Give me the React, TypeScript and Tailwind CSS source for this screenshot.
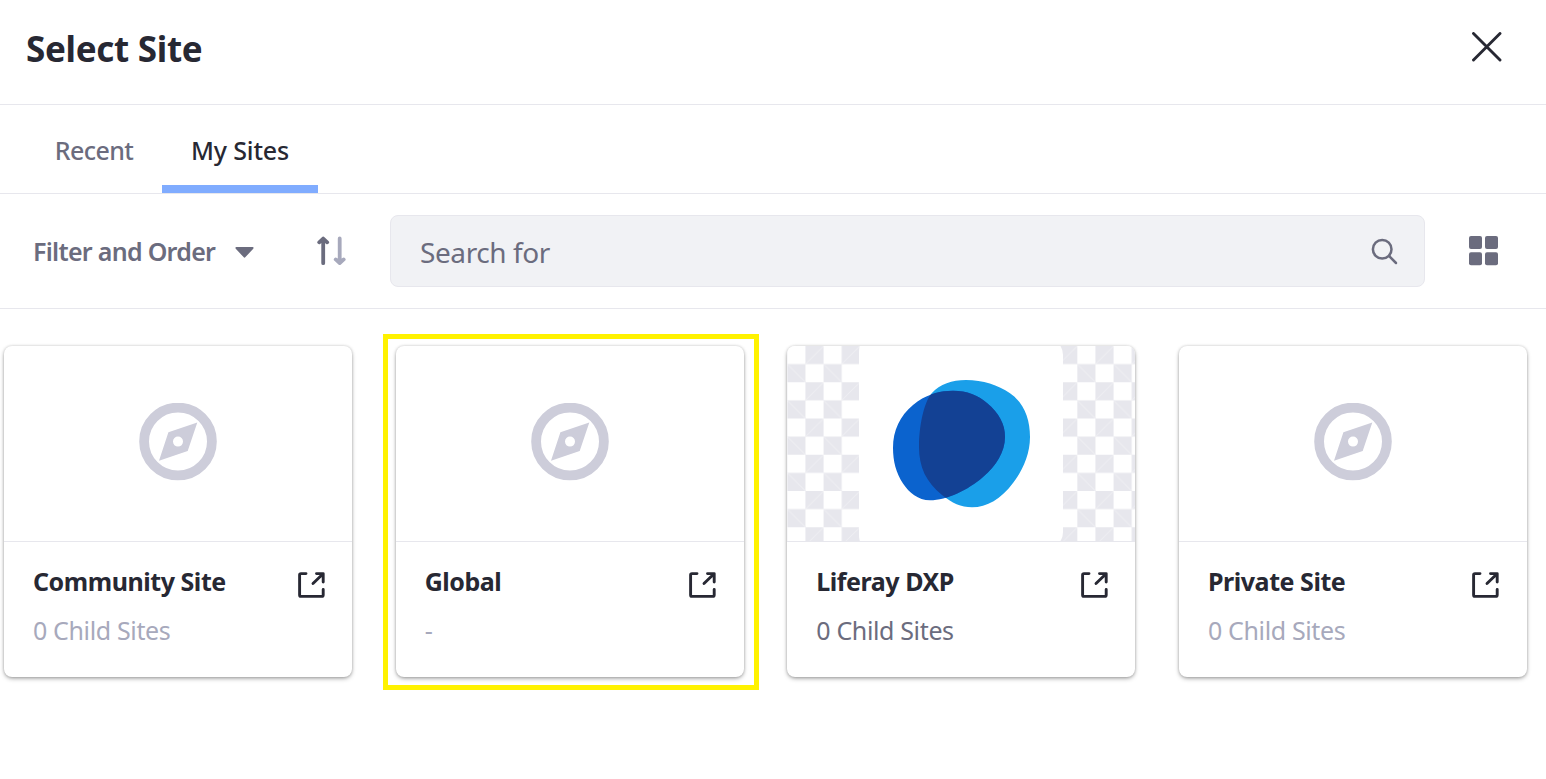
import React from 'react';

type Site = { name: string; detail: string; muted?: boolean; logo?: boolean; highlighted?: boolean };

const sites: Site[] = [
  { name: 'Community Site', detail: '0 Child Sites', muted: true },
  { name: 'Global', detail: '-', muted: true, highlighted: true },
  { name: 'Liferay DXP', detail: '0 Child Sites', logo: true },
  { name: 'Private Site', detail: '0 Child Sites', muted: true },
];

const LIGHT =
  'M179 34C196 34 211 39 223 47.3C237 57 243 73 243 91C243 108 236 124 226 137C214 153 200 161.3 185 161.3C174 161.3 165 157 155 149C139 136 132 121 132 101C132 81 136.500 57 144.7 47.3C153 38 165 34 179 34Z';
const DARK =
  'M166 44.7C180 44.7 191 49 200 57C212 67 218 78 218 91C218 106 209 120 196 131C181 144 160 154.3 143 154.3C131 154.3 122 146.500 116 137.500C109 127 106 115 106 102C106 84 113 70 126 59C138 49 151 44.7 166 44.7Z';

function Compass() {
  return (
    <svg className="-mt-[3px] size-[78px]" viewBox="0 0 78 78" fill="none">
      <circle cx="39" cy="38.5" r="33.9" stroke="#cdcdda" strokeWidth="9.8" />
      <path
        fill="#cdcdda"
        fillRule="evenodd"
        d="M58.3 19.5 48.7 48 20 57.7 29.4 29.2ZM39 33.6a5 5 0 1 0 0 10 5 5 0 0 0 0-10Z"
      />
    </svg>
  );
}

function Logo() {
  return (
    <svg className="h-full w-full" viewBox="0 0 348 195" preserveAspectRatio="none">
      <defs>
        <pattern id="checker" x="0.33" y="0" width="36.25" height="36.25" patternUnits="userSpaceOnUse">
          <rect width="36.25" height="36.25" fill="#fff" />
          <rect x="18.12" width="18.13" height="18.12" fill="#e7e7ed" />
          <rect y="18.12" width="18.12" height="18.13" fill="#e7e7ed" />
          <path d="M18.12 18.12 36.25 0M0 18.12 18.12 36.25" stroke="#efeff3" strokeWidth="1" />
        </pattern>
        <clipPath id="back">
          <path d={LIGHT} />
        </clipPath>
      </defs>
      <rect width="348" height="195" fill="url(#checker)" shapeRendering="crispEdges" />
      <path d="M73 0H273.500Q276 4 276 9V186Q276 191 273.500 195H73Q72 193 72 187V8Q72 2 73 0Z" fill="#fff" />
      <path d={LIGHT} fill="#1a9fe9" />
      <path d={DARK} fill="#0b63ce" />
      <path d={DARK} fill="#134194" clipPath="url(#back)" />
    </svg>
  );
}

function OpenIcon() {
  return (
    <svg className="mt-[7px] -mr-[0.500px] h-[26px] w-[27px] shrink-0" viewBox="0 0 27 26" fill="none" stroke="#272833" strokeWidth="2.9" strokeLinecap="round" strokeLinejoin="round">
      <path d="M8 1.600H3Q1.600 1.600 1.600 3V23Q1.600 24.400 3 24.400H23.600Q25.200 24.400 25.200 23V17.500" />
      <path d="M18.500 1.600H25.200V10M24.300 2.500 15 11.500" />
    </svg>
  );
}

function SiteCard({ site }: { site: Site }) {
  return (
    <article className="relative h-[331px] w-[348px] shrink-0">
      {site.highlighted && <div className="pointer-events-none absolute -top-[12px] -left-[12.5px] h-[356px] w-[376px] border-[5px] border-[#fff200]" />}
      <div className="h-full overflow-hidden rounded-[8px] bg-white shadow-[0_2px_5px_-1px_rgba(0,0,0,0.42),0_0_3px_rgba(0,0,0,0.18)]">
        <div className="flex h-[196px] items-center justify-center overflow-hidden border-b border-[#e7e7ed]">
          {site.logo ? <Logo /> : <Compass />}
        </div>
        <div className="flex justify-between pt-[23px] pr-[28px] pl-[29px]">
          <div className="flex flex-col gap-[17px] text-[25px] leading-[32px] whitespace-nowrap">
            <h2 className="font-bold tracking-[-0.450px] text-[#272833]">{site.name}</h2>
            <p className={site.muted ? 'tracking-[-0.360px] text-[#a7a9bc]' : 'tracking-[-0.360px] text-[#6b6c7e]'}>{site.detail}</p>
          </div>
          <OpenIcon />
        </div>
      </div>
    </article>
  );
}

export default function App() {
  return (
    <main className="flex h-[779px] w-[1546px] flex-col overflow-hidden bg-white font-['Noto_Sans',sans-serif]">
      <header className="flex h-[105px] shrink-0 justify-between border-b border-[#e7e7ed] pr-[44px] pl-[26px]">
        <h1 className="mt-[25px] text-[35px] leading-[48px] font-bold tracking-[-0.300px] text-[#272833]">Select Site</h1>
        <button aria-label="Close" className="mt-[32px] size-[30px]">
          <svg className="size-[30px]" viewBox="0 0 30 30" stroke="#272833" strokeWidth="2.900" strokeLinecap="round">
            <path d="M1.500 1.500 28 28M28 1.500 1.500 28" />
          </svg>
        </button>
      </header>
      <nav className="flex h-[89px] shrink-0 border-b border-[#e7e7ed] pl-[26px] text-[25px] leading-[32px] font-medium">
        <button className="flex w-[136px] justify-center pt-[29px] tracking-[-0.600px] text-[#6b6c7e]">Recent</button>
        <button className="flex w-[156px] justify-center border-b-[8px] border-[#80acff] pt-[29px] tracking-[-0.150px] text-[#272833]">My Sites</button>
      </nav>
      <section className="flex h-[115px] shrink-0 items-center border-b border-[#e7e7ed] pl-[33px]">
        <button className="flex w-[221px] items-center justify-between text-[25px] leading-[32px] font-semibold tracking-[-0.710px] whitespace-nowrap text-[#6b6c7e]">
          Filter and Order
          <svg className="mt-[2px] h-[11px] w-[19px]" viewBox="0 0 20 11" fill="#6b6c7e" preserveAspectRatio="none">
            <path d="M1.500 0H18.500Q20.200 .4 19.200 1.700L11 10.100Q10 11.200 9 10.100L.8 1.700Q-.2.4 1.500 0Z" />
          </svg>
        </button>
        <button aria-label="Sort" className="ml-[62px] h-[30px] w-[30px]">
          <svg className="h-[30px] w-[30px]" viewBox="0 0 30 30" fill="none" strokeWidth="3.800" strokeLinecap="round" strokeLinejoin="round">
            <path stroke="#6b6c7e" d="M7.200 27.200V3.500M3.200 6.300 7.200 2.600 11.200 6.300" />
            <path stroke="#a7a9bc" d="M23.700 2.500V26M19.700 23.400 23.700 27 27.700 23.400" />
          </svg>
        </button>
        <div className="ml-[44px] flex h-[72px] w-[1035px] items-center justify-between rounded-[8px] border border-[#e7e7ed] bg-[#f1f2f5] pr-[26px] pl-[29px]">
          <input aria-label="Search for" placeholder="Search for" className="mt-[1px] w-[600px] bg-transparent text-[28px] leading-[38px] tracking-[-0.400px] text-[#6b6c7e] outline-none placeholder:text-[#6b6c7e]" />
          <svg className="size-[27px]" viewBox="0 0 27 27" fill="none" stroke="#6b6c7e" strokeWidth="2.500" strokeLinecap="round">
            <circle cx="11.200" cy="11.200" r="9.300" />
            <path d="M18.200 18.200 25 25" />
          </svg>
        </div>
        <button aria-label="Cards" className="ml-[44px] size-[30px]">
          <svg className="size-[30px]" viewBox="0 0 30 30" fill="#6b6c7e">
            <rect width="13" height="13" rx="2" />
            <rect x="16" width="13" height="13" rx="2" />
            <rect y="16.200" width="13" height="13" rx="2" />
            <rect x="16" y="16.200" width="13" height="13" rx="2" />
          </svg>
        </button>
      </section>
      <section className="flex gap-[43.670px] pt-[37px] pl-[4px]">
        {sites.map((site) => (
          <SiteCard key={site.name} site={site} />
        ))}
      </section>
    </main>
  );
}
